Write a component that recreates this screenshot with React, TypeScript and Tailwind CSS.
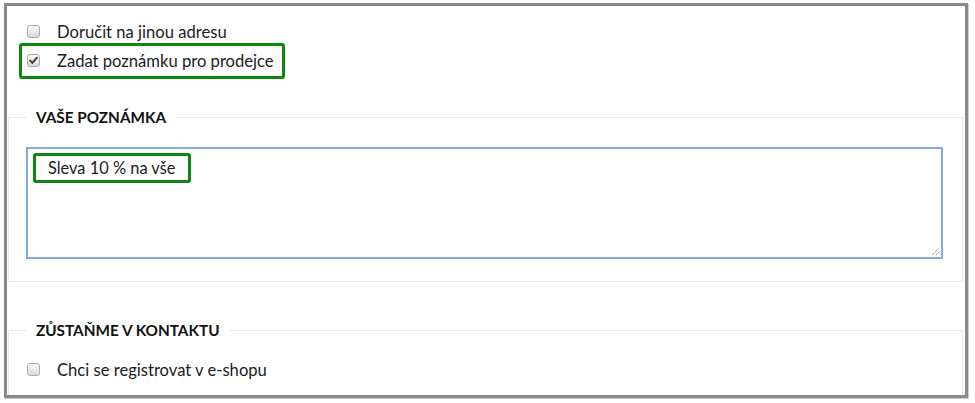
import React from "react";

function Box({ checked = false }: { checked?: boolean }) {
  return (
    <span className="relative inline-block w-[13px] h-[13px] shrink-0 rounded-[3px] border border-[#ababab] bg-linear-to-b from-[#fbfbfb] to-[#d9d9d9] -translate-y-[1px]">
      {checked && (
        <svg className="absolute left-[0px] top-[0px]" width="11" height="11" viewBox="0 0 11 11">
          <path d="M2.2 5.6 L4.4 7.9 L8.9 2.6" fill="none" stroke="#3a3a3a" strokeWidth="1.9" strokeLinecap="round" strokeLinejoin="round" />
        </svg>
      )}
    </span>
  );
}

export default function App() {
  return (
    <div className="w-[975px] h-[403px] bg-white overflow-hidden" style={{ fontFamily: "Lato, 'Open Sans', sans-serif" }}>
      <div className="ml-[4px] mt-[3px] w-[964px] h-[395px] border-[3px] border-[#898989] overflow-hidden bg-white shadow-[1px_1px_0_#cfcfcf] text-[#1c1c1c]">
        <div className="pt-[15px] pl-[12px] flex flex-col items-start">
          <div className="flex items-center h-[22px] border-x-[3px] border-transparent pl-[5px] gap-[17px] text-[16.6px]">
            <Box />
            <span>Doručit na jinou adresu</span>
          </div>
          <div className="flex items-center h-[36px] border-[3px] border-[#0f860f] rounded-[3px] pl-[5px] pr-[8px] gap-[17px] text-[16.6px]">
            <Box checked />
            <span>Zadat poznámku pro prodejce</span>
          </div>
        </div>

        <fieldset className="mt-[26px] ml-[1px] w-[955px] border border-[#e8e8e8] pl-[17px] pb-[22px]">
          <legend className="px-[10px] leading-[24px] font-bold text-[15.3px] text-[#111]">VAŠE POZNÁMKA</legend>
          <div className="relative mt-[18px] w-[917px] h-[112px] border-2 border-[#84a9e6] pt-[4px] pl-[5px]">
            <div className="flex items-center w-[158px] h-[30px] border-[3px] border-[#0f860f] rounded-[3px] pl-[12px] text-[16.4px]">
              Sleva 10 % na vše
            </div>
            <svg className="absolute right-[1px] bottom-[1px]" width="9" height="9" viewBox="0 0 9 9">
              <path d="M1 8 L8 1 M5 8 L8 5" stroke="#666" strokeWidth="1" strokeDasharray="1 1" />
            </svg>
          </div>
        </fieldset>

        <fieldset className="mt-[36px] ml-[1px] w-[955px] border border-[#e8e8e8] pl-[17px] pb-[22px]">
          <legend className="px-[10px] leading-[24px] font-bold text-[15.3px] text-[#111]">ZŮSTAŇME V KONTAKTU</legend>
          <div className="mt-[17px] ml-[1px] flex items-center h-[22px] gap-[17px] text-[16.6px]">
            <Box />
            <span>Chci se registrovat v e-shopu</span>
          </div>
        </fieldset>
      </div>
    </div>
  );
}
